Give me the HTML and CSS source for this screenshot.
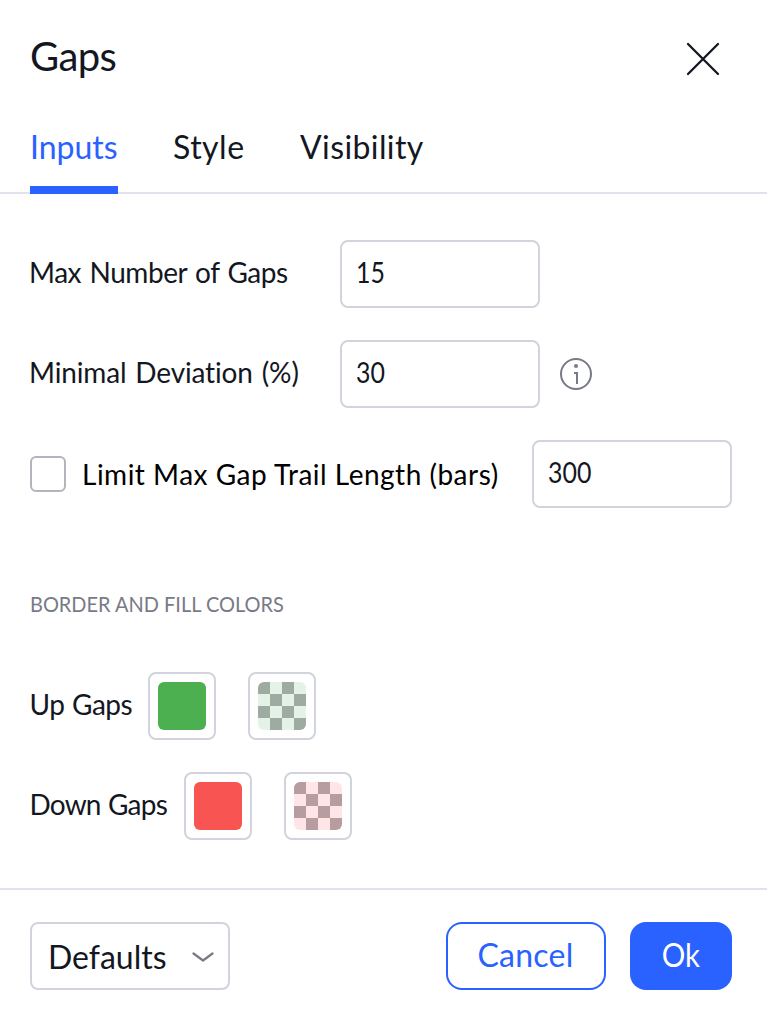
FILE: index.html
```html
<!DOCTYPE html>
<html lang="en">
<head>
<meta charset="utf-8">
<title>Gaps</title>
<link rel="stylesheet" href="styles.css">
</head>
<body>
<main class="dialog">
  <header class="header">
    <h1 class="title">Gaps</h1>
    <button class="close" aria-label="Close">
      <svg width="34" height="34" viewBox="0 0 34 34" fill="none" stroke="#131722" stroke-width="2.3" stroke-linecap="round"><path d="M2 2l30 30M32 2L2 32"/></svg>
    </button>
  </header>
  <nav class="tabs">
    <a class="tab tab-active">Inputs</a>
    <a class="tab tab-style">Style</a>
    <a class="tab tab-visibility">Visibility</a>
  </nav>
  <section class="content">
    <div class="row">
      <label class="label label-wide t-max">Max Number of Gaps</label>
      <div class="field"><span class="number">15</span></div>
    </div>
    <div class="row">
      <label class="label label-wide t-min">Minimal Deviation (%)</label>
      <div class="field"><span class="number">30</span></div>
      <svg class="info" width="32" height="32" viewBox="0 0 32 32" fill="none"><circle cx="16" cy="16" r="15" stroke="#787b86" stroke-width="2"/><circle cx="16" cy="8" r="2" fill="#787b86"/><path d="M14 15h3v11" stroke="#787b86" stroke-width="2"/></svg>
    </div>
    <div class="row">
      <span class="checkbox"></span>
      <label class="check-label">Limit Max Gap Trail Length (bars)</label>
      <div class="field"><span class="number">300</span></div>
    </div>
    <h2 class="section-title">BORDER AND FILL COLORS</h2>
    <div class="row">
      <span class="label label-up">Up Gaps</span>
      <span class="swatch"><span class="color green"></span></span>
      <span class="swatch"><span class="color checker-green"></span></span>
    </div>
    <div class="row">
      <span class="label label-down">Down Gaps</span>
      <span class="swatch"><span class="color red"></span></span>
      <span class="swatch"><span class="color checker-red"></span></span>
    </div>
  </section>
  <footer class="footer">
    <button class="select"><span>Defaults</span>
      <svg class="chevron" width="22" height="12" viewBox="0 0 22 12" fill="none" stroke="#787b86" stroke-width="2.2" stroke-linecap="round" stroke-linejoin="round"><path d="M1.5 2.5L11 9.5l9.5-7"/></svg>
    </button>
    <button class="button cancel">Cancel</button>
    <button class="button ok"><span class="ok-text">Ok</span></button>
  </footer>
</main>
</body>
</html>
```
FILE: styles.css
```css
* { box-sizing: border-box; }
body { margin: 0; background: #fff; color: #131722; font-family: Lato, "Open Sans", sans-serif; font-variant-ligatures: none; }
button { font: inherit; color: inherit; background: none; border: 0; padding: 0; margin: 0; }
svg { display: block; flex: none; }
.dialog { width: 767px; height: 1015px; display: flex; flex-direction: column; white-space: nowrap; }
.header { height: 118px; padding: 30px 47px 0 30px; display: flex; justify-content: space-between; align-items: flex-start; }
.title { margin: 0; padding-top: 2px; font-size: 40px; line-height: 49px; font-weight: 400; letter-spacing: -.6px; }
.close { padding-top: 12px; }
.tabs { height: 76px; padding-left: 30px; display: flex; font-size: 32px; border-bottom: 2px solid #e0e3eb; }
.tab { height: 76px; padding-top: 9px; line-height: 40px; }
.tab-active { width: 88px; color: #2962ff; border-bottom: 8px solid #2962ff; }
.tab-style { width: 72px; margin-left: 55px; letter-spacing: .5px; }
.tab-visibility { margin-left: 55px; letter-spacing: .4px; }
.content { padding: 46px 30px 0; flex: 1; font-size: 28px; }
.row { height: 68px; margin-bottom: 32px; display: flex; align-items: center; }
.label { line-height: 34px; padding-bottom: 4px; flex: none; }
.label-wide { width: 310px; }
.t-max { letter-spacing: -.45px; word-spacing: 1.7px; text-indent: -1px; }
.t-min { letter-spacing: -.15px; word-spacing: 2px; text-indent: -1px; }
.label-up { width: 118px; letter-spacing: -.5px; word-spacing: 1px; text-indent: -.5px; }
.label-down { width: 154px; letter-spacing: -.8px; word-spacing: 1px; text-indent: -.5px; }
.field { width: 200px; height: 68px; padding: 0 0 4px 14px; display: flex; align-items: center; border: 2px solid #d1d4dc; border-radius: 8px; flex: none; }
.number { transform: scaleX(.89); transform-origin: 0 50%; }
.info { margin-left: 20px; }
.checkbox { width: 36px; height: 36px; border: 2px solid #b2b5be; border-radius: 6px; flex: none; }
.check-label { width: 450px; margin-left: 16px; color: #000; line-height: 34px; letter-spacing: .5px; word-spacing: 0; flex: none; }
.section-title { margin: 82px 0 54px; color: #787b86; font-size: 22px; line-height: 28px; font-weight: 400; transform: scaleX(.907); transform-origin: 0 50%; }
.swatch { width: 68px; height: 68px; margin-right: 32px; border: 2px solid #d1d4dc; border-radius: 8px; display: grid; place-items: center; }
.color { width: 48px; height: 48px; border-radius: 6px; }
.green { background: #4caf50; }
.red { background: #f75452; }
.checker-green { background: repeating-conic-gradient(#e4f3e5 0 25%, #9daba1 0 50%) 0 0 / 24px 24px; }
.checker-red { background: repeating-conic-gradient(#ffe5e5 0 25%, #b79da0 0 50%) 0 0 / 24px 24px; }
.footer { height: 127px; padding: 32px 35px 0 30px; display: flex; align-items: flex-start; border-top: 2px solid #e0e3eb; font-size: 32px; }
.select { width: 200px; height: 68px; padding: 0 14px 0 16px; border: 2px solid #d1d4dc; border-radius: 8px; display: flex; align-items: center; justify-content: space-between; }
.chevron { margin-top: 1px; }
.button { height: 68px; padding-bottom: 3px; border-radius: 16px; line-height: 40px; }
.cancel { width: 160px; margin-left: auto; border: 2px solid #2962ff; color: #2962ff; letter-spacing: .25px; padding-right: 1px; }
.ok { width: 102px; margin-left: 24px; background: #2962ff; color: #fff; }
.ok-text { display: inline-block; transform: scaleX(.92); }
```
